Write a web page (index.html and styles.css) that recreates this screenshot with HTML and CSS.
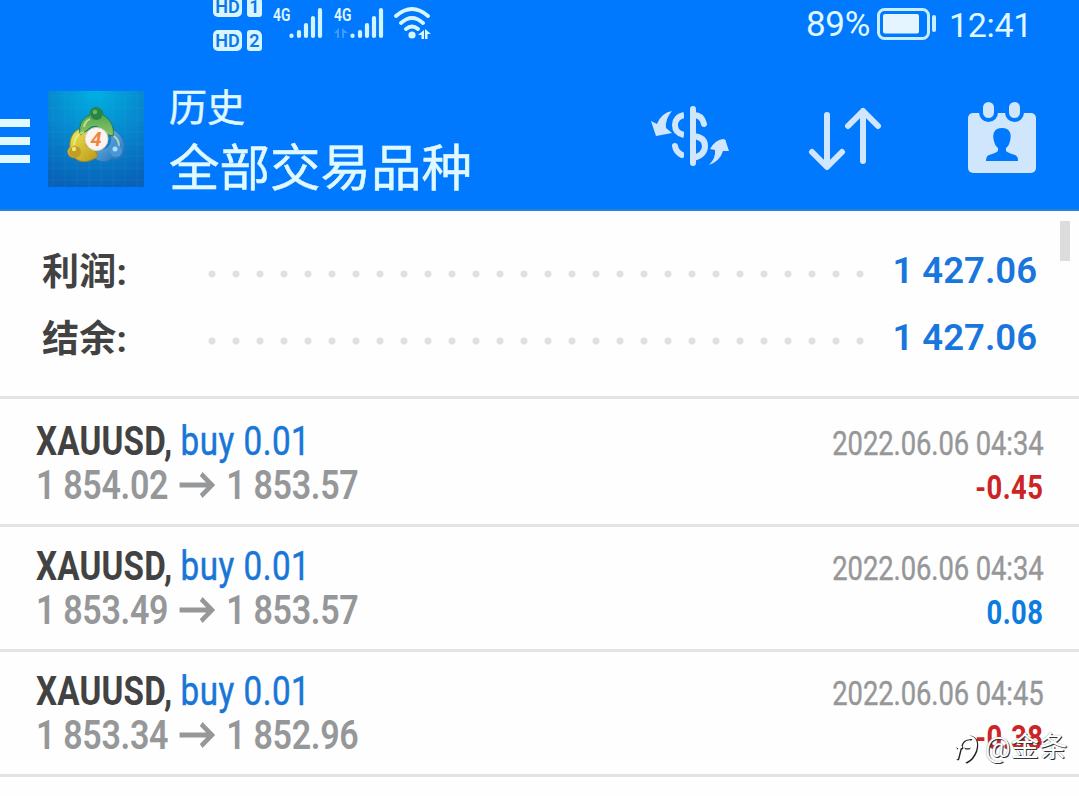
FILE: index.html
```html
<!DOCTYPE html>
<html lang="zh-CN">
<head>
<meta charset="utf-8">
<title>历史</title>
<link rel="stylesheet" href="styles.css">
</head>
<body>
<div class="app">
<header class="header">
  <div class="status">
    <div class="sims">
      <div class="sim"><span class="tag hd">HD</span><span class="tag num">1</span></div>
      <div class="sim"><span class="tag hd">HD</span><span class="tag num">2</span></div>
    </div>
    <div class="signal"><span class="gen">4G</span>
      <svg width="36" height="34" viewBox="0 0 36 34" class="bars"><path d="M3.500 29.500v.5M11 26v4M18 19v11M25 12v18M32 4v26"/></svg>
    </div>
    <div class="signal second"><span class="gen">4G</span>
      <svg class="data" width="14" height="12" viewBox="0 0 14 12"><path d="M0 6L5 1V11H3V6ZM8 1L14 6H10V11H8Z"/></svg>
      <svg width="36" height="34" viewBox="0 0 36 34" class="bars"><path d="M3.500 29.500v.5M11 26v4M18 19v11M25 12v18M32 4v26"/></svg>
    </div>
    <svg class="wifi" width="40" height="34" viewBox="0 0 40 34"><g fill="none" stroke="#d8f6ff" stroke-width="3.800" stroke-linecap="round"><path d="M2 10Q18 -4 34 10M7 17Q18 7 29 17M12 23Q18 18 24 23"/></g><circle cx="18" cy="29" r="3.600" fill="#d8f6ff"/><path d="M24 29L30 24V33H27.500V29ZM31 23L37 28H33.500V33H31Z" fill="#d8f6ff"/></svg>
    <div class="power"><span class="pct">89%</span>
      <svg width="61" height="34" viewBox="0 0 61 34"><rect x="1.500" y="2.500" width="50" height="29" rx="6" fill="none" stroke="#c9efff" stroke-width="3"/><rect x="6" y="7" width="36" height="19.500" rx="2" fill="#e4f5ff"/><path d="M57 10v13" stroke="#c9efff" stroke-width="4" stroke-linecap="round"/></svg>
      <span class="clock">12:41</span></div>
  </div>
  <div class="toolbar">
    <div class="menu"><i></i><i></i><i></i></div>
    <svg class="logo" width="96" height="96" viewBox="0 0 96 96">
      <defs>
        <radialGradient id="bg" cx=".5" cy="0" r="1"><stop offset="0" stop-color="#00b0e2"/><stop offset=".55" stop-color="#0785cd"/><stop offset="1" stop-color="#0863b8"/></radialGradient>
        <linearGradient id="gr" x2="0" y2="1"><stop stop-color="#3c9b50"/><stop offset="1" stop-color="#8fc663"/></linearGradient>
        <linearGradient id="ye" x2="1" y2="1"><stop stop-color="#f5ec55"/><stop offset="1" stop-color="#b79616"/></linearGradient>
        <linearGradient id="bl" x2="1" y2="1"><stop stop-color="#8bd0f1"/><stop offset="1" stop-color="#1668b6"/></linearGradient>
      </defs>
      <path fill="url(#bg)" d="M0 0H96V96H0z"/>
      <path d="M5 0V96M17 0V96M29 0V96M41 0V96M53 0V96M65 0V96M77 0V96M89 0V96M0 5H96M0 17H96M0 29H96M0 41H96M0 53H96M0 65H96M0 77H96M0 89H96" stroke="#54c2e5" stroke-opacity=".1"/>
      <path d="M62 37C74 41 79 54 76 61C76 69 68 69 63 68C56 74 46 70 40 60L50 57Q66 61 62 37Z" fill="url(#bl)" stroke="#2471b3"/>
      <path d="M40 38C28 35 21 45 22 56C18 59 19 67 27 67C33 73 43 71 50 65L47 59Q32 57 40 38Z" fill="url(#ye)" stroke="#9a8727"/>
      <path d="M32 44C30 32 36 26 42 24C41 14 55 14 55 24C62 28 67 36 65 45L57 43Q49 29 38 40Z" fill="url(#gr)" stroke="#217c4c"/>
      <path d="M26 54Q27 43 36 41M36 36Q37 30 42 28M66 45Q73 51 70 58" fill="none" stroke="#e4f7ae" stroke-width="2" opacity=".65"/>
      <circle cx="48.500" cy="23" r="6" fill="#2a8545"/><circle cx="27" cy="61" r="6" fill="#c19d26"/><circle cx="68" cy="60" r="6" fill="#4797da"/>
      <circle cx="47" cy="21" r="2.200" fill="#68b874"/><circle cx="26" cy="58" r="2.200" fill="#efe37b"/><circle cx="67" cy="58" r="2.500" fill="#acdfff"/>
      <circle cx="48.500" cy="48" r="11.500" fill="#faf5f0" stroke="#d9d1c8"/>
      <text x="48" y="55" text-anchor="middle" class="four">4</text>
    </svg>
    <div class="titles"><div class="sub">历史</div><div class="title">全部交易品种</div></div>
    <svg class="act money" width="80" height="64" viewBox="0 0 80 64">
      <g fill="none" stroke="#cfe6fc" stroke-width="6"><path d="M42 5V59" stroke-linecap="round"/><path d="M43 11Q51 11 53 20" stroke-linecap="round"/><path d="M33 11Q24 13 24 21Q24 29 33 31M42 32Q54 33 54 42Q54 51 42 54"/><path d="M24 42Q25 48 31 51" stroke-linecap="round"/></g>
      <path fill="#0079ff" d="M33 6h5v54h-5z"/>
      <path d="M21 7Q10 9 6 20L0 17L5 32L21 29L15 24Q14 15 21 7ZM58 61Q65 54 64 46L59 45Q64 36 72 35Q75 35 75 38L78 47L72 47Q69 57 58 61Z" fill="#cfe6fc"/>
    </svg>
    <svg class="act sort" width="74" height="66" viewBox="0 0 74 66"><path d="M19 9V60M4 46L19 61L34 46M55 55V5M40 20L55 5L70 20" fill="none" stroke="#cfe6fc" stroke-width="6" stroke-linecap="round" stroke-linejoin="round"/></svg>
    <svg class="act" width="70" height="72" viewBox="0 0 70 72"><rect x="1" y="11" width="68" height="60" rx="5" fill="#cfe6fc"/><g fill="#cfe6fc" stroke="#0079ff" stroke-width="4"><rect x="14" y="-2" width="15" height="20" rx="7.500"/><rect x="40" y="-2" width="15" height="20" rx="7.500"/></g><path d="M35 26C27 26 25 32 27 39Q28 44 31 46V49Q29 51 22 53Q19 54 19 59H51Q51 54 48 53Q41 51 39 49V46Q42 44 43 39C45 32 43 26 35 26Z" fill="#0079ff"/></svg>
  </div>
</header>
<main>
  <section class="summary">
    <div class="line"><span class="label">利润:</span><span class="dots"></span><span class="amount">1 427.06</span></div>
    <div class="line"><span class="label">结余:</span><span class="dots"></span><span class="amount">1 427.06</span></div>
    <div class="scroll"></div>
  </section>
  <section class="deal first">
    <div class="left"><div class="name"><b>XAUUSD,</b> <span>buy 0.01</span></div><div class="prices">1 854.02<svg class="arrow" width="44" height="28" viewBox="0 0 44 28"><path d="M1 14H40M27 3L40 14L27 25"/></svg>1 853.57</div></div>
    <div class="right"><div class="date">2022.06.06 04:34</div><div class="result loss">-0.45</div></div>
  </section>
  <section class="deal">
    <div class="left"><div class="name"><b>XAUUSD,</b> <span>buy 0.01</span></div><div class="prices">1 853.49<svg class="arrow" width="44" height="28" viewBox="0 0 44 28"><path d="M1 14H40M27 3L40 14L27 25"/></svg>1 853.57</div></div>
    <div class="right"><div class="date">2022.06.06 04:34</div><div class="result">0.08</div></div>
  </section>
  <section class="deal">
    <div class="left"><div class="name"><b>XAUUSD,</b> <span>buy 0.01</span></div><div class="prices">1 853.34<svg class="arrow" width="44" height="28" viewBox="0 0 44 28"><path d="M1 14H40M27 3L40 14L27 25"/></svg>1 852.96</div></div>
    <div class="right"><div class="date">2022.06.06 04:45</div><div class="result loss">-0.38</div></div>
  </section>
</main>
<div class="mark"><svg width="32" height="34" viewBox="0 0 32 34"><g fill="none" stroke-linecap="round"><path d="M5 28L8 16Q10 7 18 8M5 17H9M13 17H16M18 6Q26 8 23 20Q20 28 14 31" stroke="#222" stroke-width="2.800"/><path d="M4 27L7 15Q9 7 17 7M5 16H8M13 16H16M17 6Q25 8 22 19Q19 27 13 30" stroke="#fff" stroke-width="2.400"/></g></svg><span>@金条</span></div>
</div>
</body>
</html>
```
FILE: styles.css
```css
* { box-sizing: border-box; }
body { margin: 0; background: #fefefe; font-family: Roboto, "Noto Sans CJK SC", sans-serif; }
.app { position: relative; width: 1079px; height: 796px; overflow: hidden; }
.header { height: 211px; background: #0079ff; border-bottom: 2px solid #2a7fdc; color: #e0f8ff; }
.status { height: 58px; display: flex; padding-left: 213px; }
.sims { display: flex; flex-direction: column; gap: 13px; margin-top: -4px; width: 59px; }
.sim { display: flex; gap: 5px; height: 21px; }
.tag { background: #d8f4ff; color: #0b78e8; font-weight: 600; font-size: 18px; line-height: 22px; height: 21px; text-align: center; border-radius: 5px; }
.hd { width: 29px; }
.num { width: 15px; border-radius: 3px 6px 3px 3px; }
.signal { position: relative; flex: none; display: flex; width: 61px; height: 46px; padding: 6px 0 0 16px; }
.gen { position: absolute; left: 1px; top: 6px; font-size: 18px; line-height: 18px; font-weight: 600; transform: scaleX(.77); transform-origin: left; }
.bars path { fill: none; stroke: #d0f5ff; stroke-width: 4.2; stroke-linecap: round; }
.data { position: absolute; left: 1px; top: 27px; fill: #3c9dff; }
.wifi { flex: none; margin-top: 6px; }
.power { display: flex; margin-left: 372px; padding-top: 7px; font-size: 35px; line-height: 36px; }
.pct { width: 71px; letter-spacing: -.3px; }
.clock { margin-left: 11px; font-size: 34px; letter-spacing: -.3px; }
.toolbar { height: 151px; display: flex; align-items: flex-start; padding-top: 33px; }
.menu { width: 30px; margin: 28px 18px 0 0; display: grid; gap: 10px; }
.menu i { height: 8px; background: #e0f8ff; }
.logo { flex: none; }
.four { font: italic 700 20px Roboto, sans-serif; fill: #ef8742; }
.titles { width: 482px; margin: -5px 0 0 25px; -webkit-text-stroke: .5px #e0f8ff; }
.sub { font-size: 38px; line-height: 44px; }
.title { font-size: 50.5px; line-height: 78px; }
.act { flex: none; }
.money { margin-top: 13px; width: 80px; }
.sort { margin: 15px 0 0 77px; }
.sort + .act { margin: 11px 0 0 85px; }
.summary { position: relative; height: 188px; padding: 26px 42px 0; border-bottom: 3px solid #e3e3e3; }
.line { display: flex; align-items: center; height: 67px; }
.label { width: 158px; color: #424242; font-size: 37px; font-weight: 700; margin-top: -3px; letter-spacing: .2px; }
.dots { width: 672px; height: 24px; margin-top: 7px; background: radial-gradient(circle, #e0e0e0 3px, transparent 4px) 0 0 / 24px 24px; }
.amount { margin-left: auto; color: #1876dc; font-size: 36.5px; font-weight: 600; white-space: pre; }
.scroll { position: absolute; right: 9px; top: 10px; width: 10px; height: 40px; background: #dcdcdc; }
.deal { height: 125px; display: flex; justify-content: space-between; padding: 17px 35px 0 36px; border-bottom: 3px solid #e3e3e3; white-space: pre; }
.deal.first { height: 128px; padding-top: 20px; }
.left { transform: scaleX(.83); transform-origin: left; }
.name, .prices, .date, .result { height: 44px; line-height: 44px; }
.name { font-size: 40px; color: #1876d6; padding-top: 1px; }
.name b { color: #424242; letter-spacing: .2px; }
.name span { letter-spacing: .6px; -webkit-text-stroke: .5px #1876d6; }
.prices { font-size: 41px; font-weight: 600; color: #969799; letter-spacing: -.4px; }
.arrow { margin: 0 13px; vertical-align: 0; }
.arrow path { fill: none; stroke: #969799; stroke-width: 5; }
.right { padding-top: 3px; text-align: right; font-size: 33px; transform: scaleX(.83); transform-origin: right; }
.date { color: #969799; letter-spacing: -.1px; -webkit-text-stroke: .4px #969799; }
.result { font-weight: 700; color: #0b7ce0; letter-spacing: .6px; }
.result.loss { color: #cc2424; }
.mark { position: absolute; left: 953px; top: 731px; display: flex; align-items: center; color: #fff; font-size: 28.5px; line-height: 34px; text-shadow: 1px 1px 0 #333, 0 0 1px #777; }
```
